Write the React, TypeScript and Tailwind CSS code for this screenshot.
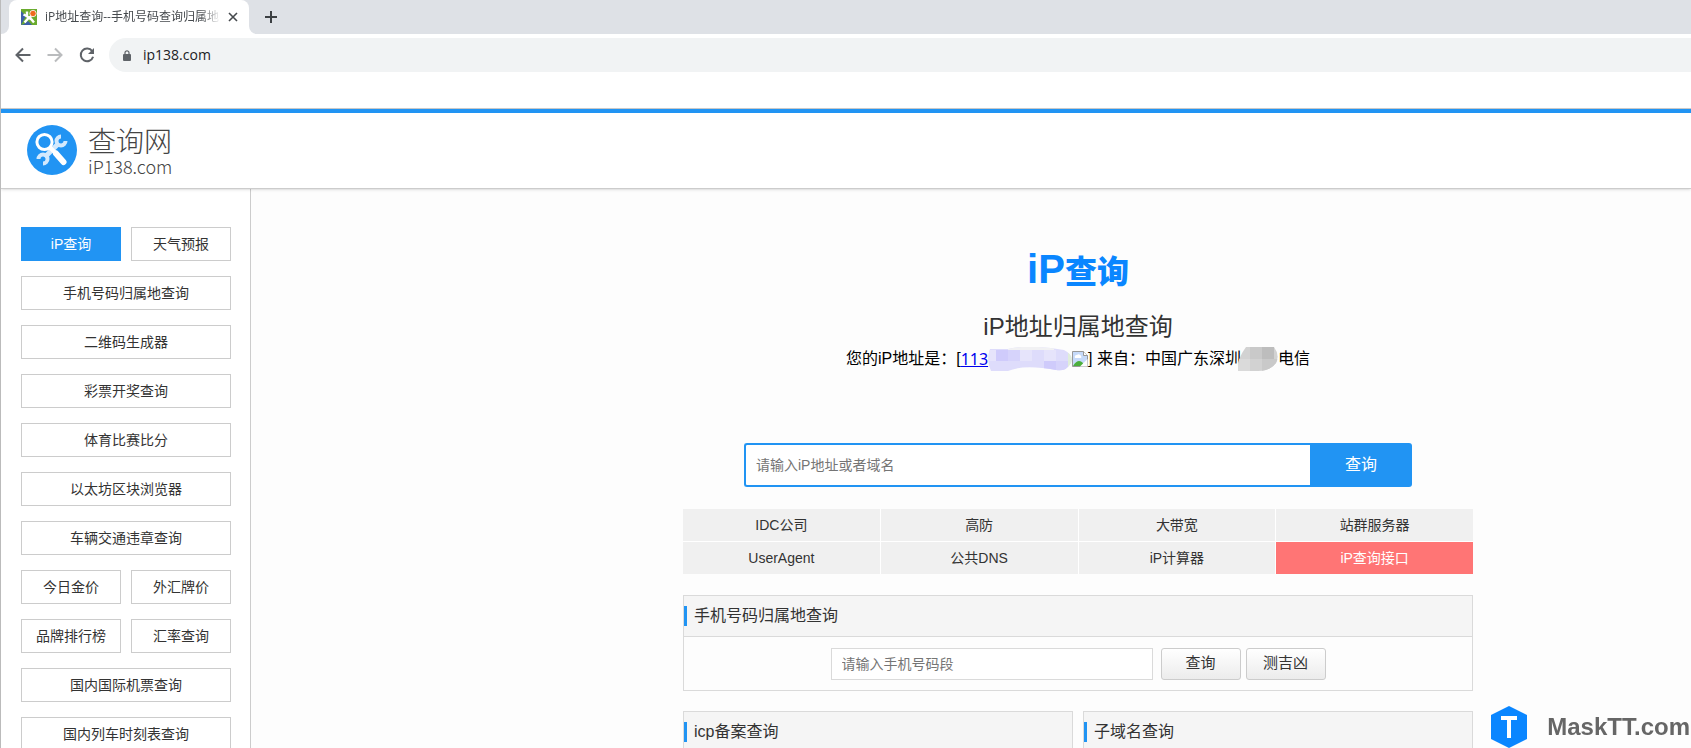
import { useState } from 'react';

const sideLinks = [
  { label: 'iP查询', half: true, active: true },
  { label: '天气预报', half: true },
  { label: '手机号码归属地查询' },
  { label: '二维码生成器' },
  { label: '彩票开奖查询' },
  { label: '体育比赛比分' },
  { label: '以太坊区块浏览器' },
  { label: '车辆交通违章查询' },
  { label: '今日金价', half: true },
  { label: '外汇牌价', half: true },
  { label: '品牌排行榜', half: true },
  { label: '汇率查询', half: true },
  { label: '国内国际机票查询' },
  { label: '国内列车时刻表查询' },
];

const adLinks = ['IDC公司', '高防', '大带宽', '站群服务器', 'UserAgent', '公共DNS', 'iP计算器', 'iP查询接口'];

function Favicon() {
  return (
    <svg viewBox="0 0 16 16" className="size-4 shrink-0">
      <rect width="16" height="16" fill="#6aab2e" />
      <path d="M0 2l5 5-5 9z" fill="#3c5fa8" />
      <path d="M0 16l3-1 4-3 4 4z" fill="#3c5fa8" />
      <path
        d="M2.500 5.500l3 1.500 5 3.500 2.500 3M6 2.500v4.500M9 9l1.500-3M7.500 9L3.500 13.500"
        fill="none"
        stroke="#fff"
        strokeWidth="2.400"
      />
      <circle cx="12" cy="4.500" r="3.200" fill="#f06a1d" stroke="#fff" strokeWidth="0.800" />
    </svg>
  );
}

function BrowserBar() {
  return (
    <div className="font-['Open_Sans','Noto_Sans_CJK_SC',sans-serif]">
      {/* Tab strip */}
      <div className="flex h-[34px] bg-[#dee1e6]">
        <div className="w-2 bg-white">
          <div className="h-full rounded-br-lg bg-[#dee1e6]" />
        </div>
        <div className="flex w-[240px] items-center rounded-t-lg bg-white pl-3">
          <Favicon />
          <span className="ml-2 w-[176px] overflow-hidden text-xs whitespace-nowrap text-[#45494d] [mask-image:linear-gradient(to_right,#000_88%,transparent)]">
            iP地址查询--手机号码查询归属地
          </span>
          <button type="button" aria-label="关闭标签页" className="ml-[7px]">
            <svg viewBox="0 0 10 10" className="size-[10px]" stroke="#45494d" strokeWidth="1.6">
              <path d="M1 1l8 8M9 1l-8 8" />
            </svg>
          </button>
        </div>
        <div className="flex-1 bg-white">
          <div className="flex h-full items-center rounded-bl-lg bg-[#dee1e6] pl-4">
            <button type="button" aria-label="新标签页">
              <svg viewBox="0 0 12 12" className="size-3" stroke="#3c4043" strokeWidth="2">
                <path d="M6 0v12M0 6h12" />
              </svg>
            </button>
          </div>
        </div>
      </div>

      {/* Address bar */}
      <div className="flex h-[42px] items-center bg-white pl-[14px]">
        <button type="button" aria-label="后退">
          <svg viewBox="0 0 16 16" className="size-4" fill="none" stroke="#5f6368" strokeWidth="2">
            <path d="M15.500 8H2M8 1.500L1.500 8 8 14.500" />
          </svg>
        </button>
        <button type="button" aria-label="前进" className="ml-4">
          <svg viewBox="0 0 16 16" className="size-4" fill="none" stroke="#babcbe" strokeWidth="2">
            <path d="M.5 8H14M8 1.500L14.500 8 8 14.500" />
          </svg>
        </button>
        <button type="button" aria-label="重新加载" className="ml-4">
          <svg viewBox="0 0 16 16" className="size-4" fill="none" stroke="#5f6368" strokeWidth="2">
            <path d="M13.200 4.200A6.300 6.300 0 1 0 14.100 9.700" />
            <path d="M15 1v6H9z" fill="#5f6368" stroke="none" />
          </svg>
        </button>
        <div className="ml-[14px] flex h-[34px] flex-1 items-center rounded-l-full bg-[#f1f3f4] pl-[14px]">
          <svg viewBox="0 0 8 11" className="h-[11px] w-2" fill="#5f6368">
            <rect y="4" width="8" height="7" rx="1" />
            <path d="M2 5V2.800a2 2 0 0 1 4 0V5" fill="none" stroke="#5f6368" strokeWidth="1.200" />
          </svg>
          <input
            aria-label="地址栏"
            defaultValue="ip138.com"
            className="ml-3 flex-1 bg-transparent text-sm text-[#202124] outline-none"
          />
        </div>
      </div>
      <div className="h-[33px] border-b border-[#ccc] bg-white" />
    </div>
  );
}

function SiteLogo() {
  return (
    <a href="#" className="flex items-center gap-[11px]">
      <svg viewBox="0 0 50 50" className="size-[50px]" fill="none">
        <circle cx="25" cy="25" r="25" fill="#2194f3" />
        {/* wrench */}
        <g stroke="#d3e9fd">
          <path d="M18 32l13-13" strokeWidth="5" />
          <path d="M34 11.500A4.500 4.500 0 1 0 38.500 16" strokeWidth="4" />
          <path d="M16 38.500A4.500 4.500 0 1 0 11.500 34" strokeWidth="4" />
        </g>
        {/* magnifier */}
        <circle cx="17.500" cy="17" r="7.600" fill="#2194f3" stroke="#fff" strokeWidth="3" />
        <path d="M22.500 22l8 8" stroke="#fff" strokeWidth="4" />
        <path d="M29 28.500l7.500 8.500" stroke="#fff" strokeWidth="6" strokeLinecap="round" />
      </svg>
      <span className="flex flex-col font-['Noto_Sans_CJK_SC',sans-serif] font-light text-[#444]">
        <span className="text-[28px] leading-8">查询网</span>
        <span className="text-lg leading-5">iP138.com</span>
      </span>
    </a>
  );
}

function PanelTitle({ children }: { children: string }) {
  return (
    <h2 className="flex h-10 items-center bg-[#f5f5f5] text-base text-[#333]">
      <span className="mr-[7px] h-5 w-[3px] bg-[#2194f3]" />
      {children}
    </h2>
  );
}

export default function App() {
  const [ip, setIp] = useState('');
  const [phone, setPhone] = useState('');

  return (
    <div className="h-screen overflow-hidden border-l border-[#bbb] bg-[#fdfdfd] font-['Liberation_Sans','Noto_Sans_CJK_SC',sans-serif] text-[#333]">
      <BrowserBar />

      {/* Header */}
      <header className="relative flex h-20 items-center border-t-4 border-b border-t-[#2194f3] border-b-[#ccc] bg-white pb-[2px] pl-[26px] shadow-sm">
        <SiteLogo />
      </header>

      <div className="flex">
        {/* Side menu */}
        <nav className="flex h-[800px] w-[250px] shrink-0 flex-wrap content-start gap-x-[10px] gap-y-[15px] border-r border-[#ccc] bg-white pt-[38px] pl-5">
          {sideLinks.map(link => (
            <a
              key={link.label}
              href="#"
              className={`flex h-[34px] items-center justify-center border text-sm ${link.half ? 'w-[100px]' : 'w-[210px]'} ${
                link.active ? 'border-[#2194f3] bg-[#2194f3] text-white' : 'border-[#ccc] bg-white'
              }`}
            >
              {link.label}
            </a>
          ))}
        </nav>

        <main className="flex flex-1 flex-col items-center pt-[60px] pl-[214px]">
          <h1 className="flex items-center text-[#0a86ff]">
            <span className="text-[40px] leading-10 font-bold">iP</span>
            <span className="font-['Noto_Sans_CJK_SC',sans-serif] text-[32px] leading-10 font-black">查询</span>
          </h1>
          <p className="mt-5 text-2xl leading-9">iP地址归属地查询</p>
          <p className="flex h-7 items-center text-base whitespace-pre text-black">
            您的iP地址是：[
            <a href="#" className="font-['Noto_Sans',sans-serif] text-[#0000ee] underline">113</a>
            <svg viewBox="0 0 84 24" className="h-6 w-[84px]">
              <clipPath id="ipMask">
                <path d="M2 2H20Q40-3 76 3Q86 8 83 16Q78 25 68 23Q36 17 20 24H3Q-2 14 2 2z" />
              </clipPath>
              <g clipPath="url(#ipMask)">
                <path d="M0 0h84v24H0z" fill="#dedcfb" />
                <path d="M8 3h12v11H8zM56 14h12v10H56z" fill="#cfcbfb" />
                <path d="M20 3h12v11H20zM68 14h12v10H68z" fill="#d6d3fb" />
                <path d="M0 3h8v11H0zM32 3h12v11H32zM56 3h12v11H56z" fill="#e6e4fb" />
                <path d="M20 0h46v3H20z" fill="#f1f1f3" />
                <path d="M80 6h4v18h-4z" fill="#e0eedb" />
              </g>
            </svg>
            <svg viewBox="0 0 16 16" className="size-4">
              <path d="M.5.500h11l4 4v11H.5z" fill="#c6dafa" stroke="#999" />
              <path d="M3 7a2 2 0 0 1 2-3 2.500 2.500 0 0 1 4 1 1.500 1.500 0 0 1 0 2z" fill="#fff" />
              <path d="M1 15q5-8 10-3v3z" fill="#4caf3c" />
              <path d="M8 15.500l7.500-7.500v7.500z" fill="#fdfdfd" />
              <path d="M11.500.500v4h4" fill="#fff" stroke="#999" />
            </svg>
            {'] 来自：中国广东深圳'}
            <svg viewBox="0 0 40 24" className="-ml-[3px] h-6 w-10">
              <clipPath id="cityMask">
                <path d="M8 0h28Q42 8 38 16Q32 24 20 24H0Q-2 14 8 0z" />
              </clipPath>
              <g clipPath="url(#cityMask)">
                <path d="M0 0h40v24H0z" fill="#d2d2d2" />
                <path d="M12 0h12v12H12zM24 12h16v12H24z" fill="#c9c9c9" />
                <path d="M24 0h12v12H24z" fill="#bdbdbd" />
                <path d="M0 12h12v12H0z" fill="#dadada" />
              </g>
            </svg>
            电信
          </p>

          {/* Search */}
          <form className="mt-[70px] flex h-11 w-[668px]" onSubmit={e => e.preventDefault()}>
            <input
              aria-label="iP地址或者域名"
              value={ip}
              onChange={e => setIp(e.target.value)}
              placeholder="请输入iP地址或者域名"
              className="flex-1 rounded-l-[3px] border-2 border-r-0 border-[#2194f3] bg-white px-[10px] text-sm placeholder:text-[#757575] outline-none"
            />
            <button type="submit" className="w-[102px] rounded-r-[3px] bg-[#2194f3] text-base text-white">
              查询
            </button>
          </form>

          <div className="mt-[22px] grid w-[790px] grid-cols-4 gap-px bg-white">
            {adLinks.map(label => (
              <a
                key={label}
                href="#"
                className={`flex h-8 items-center justify-center text-sm ${
                  label === 'iP查询接口' ? 'bg-[#ff7575] text-white' : 'bg-[#f0f0f0]'
                }`}
              >
                {label}
              </a>
            ))}
          </div>

          {/* Phone lookup */}
          <section className="mt-[21px] w-[790px] border border-[#dadada]">
            <PanelTitle>手机号码归属地查询</PanelTitle>
            <form
              className="flex h-[54px] items-center justify-center border-t border-[#dadada]"
              onSubmit={e => e.preventDefault()}
            >
              <input
                aria-label="手机号码段"
                value={phone}
                onChange={e => setPhone(e.target.value)}
                placeholder="请输入手机号码段"
                className="mr-2 h-8 w-[322px] border border-[#dadada] bg-white px-[10px] text-sm placeholder:text-[#757575] outline-none"
              />
              <button
                type="submit"
                className="mr-[5px] h-8 w-20 rounded-[3px] border border-[#ccc] bg-linear-to-b from-white to-[#ececec] text-[15px]"
              >
                查询
              </button>
              <button
                type="button"
                className="h-8 w-20 rounded-[3px] border border-[#ccc] bg-linear-to-b from-white to-[#ececec] text-[15px]"
              >
                测吉凶
              </button>
            </form>
          </section>

          <div className="mt-5 grid w-[790px] grid-cols-2 gap-[10px]">
            <section className="border border-[#dadada]">
              <PanelTitle>icp备案查询</PanelTitle>
            </section>
            <section className="border border-[#dadada]">
              <PanelTitle>子域名查询</PanelTitle>
            </section>
          </div>
        </main>
      </div>

      {/* Watermark */}
      <div className="fixed right-px bottom-0 flex items-center gap-5">
        <svg viewBox="0 0 36 42" className="h-[42px] w-9">
          <path d="M18 0l18 9v24l-18 9L0 33V9z" fill="#0a86ff" />
          <path d="M10 12h16M18 12v20" stroke="#fff" strokeWidth="4" />
        </svg>
        <span className="text-2xl font-bold text-[#666]">MaskTT.com</span>
      </div>
    </div>
  );
}
